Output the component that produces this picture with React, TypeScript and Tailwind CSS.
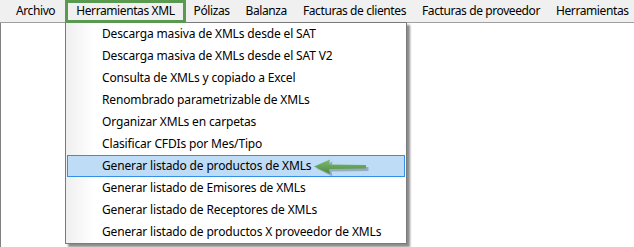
const menus = [
  "Archivo",
  "Herramientas XML",
  "Pólizas",
  "Balanza",
  "Facturas de clientes",
  "Facturas de proveedor",
  "Herramientas",
];

const items = [
  "Descarga masiva de XMLs desde el SAT",
  "Descarga masiva de XMLs desde el SAT V2",
  "Consulta de XMLs y copiado a Excel",
  "Renombrado parametrizable de XMLs",
  "Organizar XMLs en carpetas",
  "Clasificar CFDIs por Mes/Tipo",
  "Generar listado de productos de XMLs",
  "Generar listado de Emisores de XMLs",
  "Generar listado de Receptores de XMLs",
  "Generar listado de productos X proveedor de XMLs",
];

function Arrow() {
  return (
    <svg width="58" height="20" viewBox="0 0 58 20" className="ml-[1px] mt-[1px] shrink-0">
      <defs>
        <linearGradient id="g" x1="0" y1="0" x2="0" y2="1">
          <stop offset="0" stopColor="#7dba6d" />
          <stop offset="1" stopColor="#4d8c40" />
        </linearGradient>
      </defs>
      <path d="M3 10 L19 3 L18 8 L55 8.5 L55 12.5 L18 13 L19 18 Z" fill="#000" opacity="0.22" transform="translate(1.5 1.5)" />
      <path d="M2 9.5 L18 2.5 L17 7.5 L54 8 L54 11.5 L17 12 L18 17 Z" fill="url(#g)" />
    </svg>
  );
}

export default function App() {
  return (
    <div className="relative w-[634px] h-[247px] overflow-hidden bg-white text-[12px] tracking-[-0.15px] text-black" style={{ fontFamily: "'Noto Sans', sans-serif" }}>
      <div className="flex h-[23px] bg-[#f0f0f0] border-b border-[#a0a0a0] pl-[7px] whitespace-nowrap tracking-[-0.4px]">
        {menus.map((m, i) =>
          i === 1 ? (
            <div key={m} className="relative z-20 ml-[1px] h-[23px] px-[8px] border-[3px] border-[#5a9a50] leading-[16px] bg-[#f0f0f0]">
              {m}
            </div>
          ) : (
            <div key={m} className={(i === 0 ? "px-[9px]" : "px-[8px]") + " leading-[22px]"}>{m}</div>
          )
        )}
      </div>
      <div className="h-[224px] border-l border-[#808080] bg-white" />

      <div className="absolute left-[65px] top-[22px] w-[342px] h-[222px] border border-[#7a7a7a] bg-white shadow-[3px_3px_2px_rgba(0,0,0,0.45)] z-10 flex">
        <div className="w-[28px] bg-gradient-to-r from-[#efefef] to-white" />
        <div className="flex-1 -ml-[28px]">
          {items.map((t, i) => (
            <div
              key={t}
              className={
                "h-[22px] mx-[1px] pl-[34px] flex items-center whitespace-nowrap " +
                (i === 6 ? "bg-[#bedcf6] border border-[#3390e8]" : "border border-transparent")
              }
            >
              <span>{t}</span>
              {i === 6 && <Arrow />}
            </div>
          ))}
        </div>
      </div>
    </div>
  );
}
